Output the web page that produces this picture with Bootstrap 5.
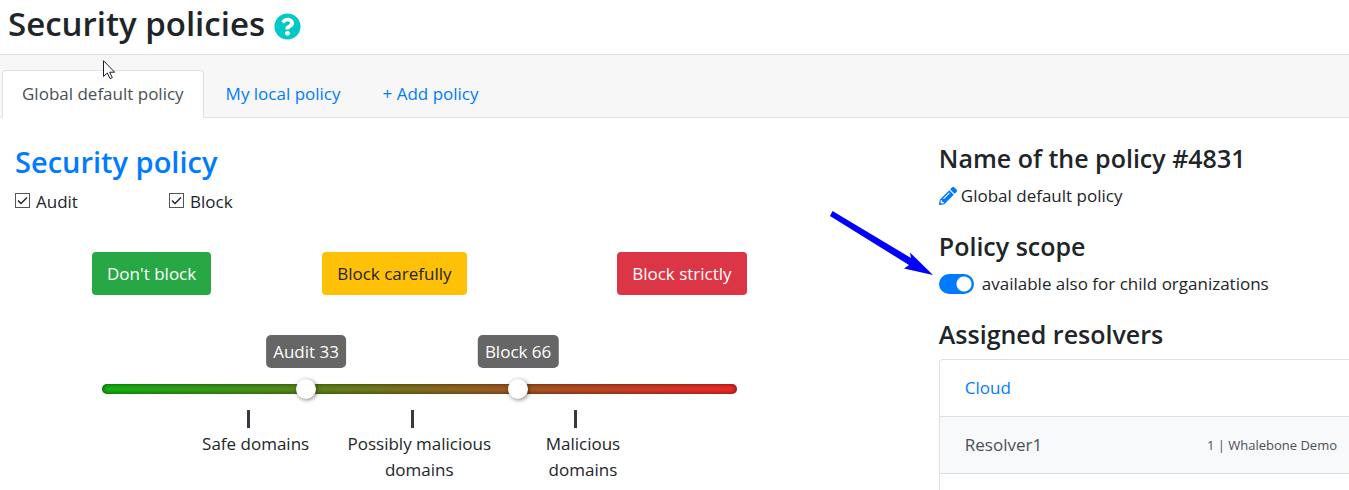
<!DOCTYPE html>
<html lang="en">
<head>
<meta charset="utf-8">
<meta name="viewport" content="width=device-width, initial-scale=1">
<title>Security policies</title>
<link href="https://cdn.jsdelivr.net/npm/bootstrap@5.3.0/dist/css/bootstrap.min.css" rel="stylesheet">
<style>
  body { font: 400 17px/26px "Open Sans", "Noto Sans", sans-serif; color: #212529; background: #fff; }
  a, .policy-title { color: #007bff; text-decoration: none; }
  h1 { font-size: 33px; line-height: 40px; font-weight: 600; }
  h2 { font-size: 29px; line-height: 36px; font-weight: 600; }
  h3 { font-size: 25px; line-height: 30px; font-weight: 600; margin-bottom: 10px; }

  .page-head { padding: 4px 8px 10px; gap: 9px; border-bottom: 1px solid #dfdfdf; }
  .help-btn { width: 27px; height: 27px; margin-top: 4px; }
  .tab-strip { padding: 15px 2px 0; background: #f7f7f7; }
  .tab-strip .nav-tabs { margin: 0 -2px; padding: 0 2px; gap: 2px; border-color: #dee2e6; }
  .tab-strip .nav-link { padding: 10px 19px; line-height: 26px; color: #007bff; border-radius: 4px 4px 0 0; }
  .tab-strip .nav-link.active { color: #495057; background: #fff; }
  .pointer { left: 103px; top: 5px; }

  .policy-grid { display: grid; grid-template-columns: 69fr 31fr; }
  .policy-main { padding: 26px 15px 0; }
  .policy-side { padding: 25px 0 0 8px; }
  .checks { display: grid; grid-template-columns: 154px 154px; margin-top: 9px; }
  .check-item { gap: 6px; }
  .tick { appearance: none; width: 15px; height: 15px; margin: 0; border: 1px solid #555; background: #fff; }
  .tick:checked { background: url("data:image/svg+xml,%3Csvg xmlns='http://www.w3.org/2000/svg' viewBox='0 0 13 13'%3E%3Cpath d='M2 6.5 5 9.5 11 3.5' fill='none' stroke='%23222' stroke-width='1.4'/%3E%3C/svg%3E"); }

  .levels { width: 73%; margin: 37px auto 0 77px; padding-right: 3px; }
  .presets { display: grid; grid-template-columns: 231fr 296fr 128fr; justify-items: start; }
  .presets .btn { font-size: 17px; line-height: 25px; padding: 8px 14px; border-radius: 4px; white-space: nowrap; }
  .preset-low { background: #28a745; color: #fff; }
  .preset-mid { background: #ffc107; color: #212529; }
  .preset-high { background: #dc3545; color: #fff; }

  .slider { display: grid; padding: 89px 10px 0; }
  .slider > * { grid-area: 1 / 1; }
  .track { height: 10px; border-radius: 5px; background: linear-gradient(90deg, #14b414, #f02828); box-shadow: inset 0 0 5px rgba(0,0,0,.6); }
  .scale-area { margin: 0 0 0 -8px; }
  .bubble { bottom: 26px; transform: translateX(-50%); padding: 4px 7px; line-height: 25px; color: #fff; background: #666; border-radius: 5px; white-space: nowrap; }
  .knob { appearance: none; height: 22px; margin: -6px -10px -6px -18px; background: none; pointer-events: none; z-index: 1; }
  .knob::-webkit-slider-thumb { appearance: none; width: 20px; height: 20px; border-radius: 50%; background: #fff; box-shadow: 1px 1px 4px rgba(0,0,0,.5); pointer-events: auto; }

  .zones { display: grid; grid-template-columns: repeat(3, 1fr); width: 75%; margin: 16px auto 0; }
  .zones > div::before { content: ""; display: block; width: 3px; height: 18px; margin: 0 auto 3px; position: relative; left: -7px; background: #343a40; }

  .scope-switch { appearance: none; width: 35px; height: 20px; margin: 0; border-radius: 10px; background: radial-gradient(circle at 25px 10px, #fff 7px, #007bff 8px); }
  .side-line { margin-bottom: 22px; }
  .callout { right: 100%; bottom: 21px; margin-right: 6px; }

  .resolvers { border: solid #dfdfdf; border-width: 1px 0 0 1px; border-radius: 4px 0 0 0; }
  .resolvers .list-group-item { border: 0; border-bottom: 1px solid #dfdfdf; border-radius: 0; padding: 15px 12px 15px 25px; background: none; color: #495057; }
  .resolvers .list-group-item:nth-child(2) { background: #f8f9fa; }
  .resolvers .list-group-item:last-child { border: 0; padding: 0; }
  .org { font-size: 13px; }
</style>
</head>
<body class="d-flex flex-column min-vh-100">
  <header class="page-head d-flex align-items-center">
    <h1 class="m-0">Security policies</h1>
    <button type="button" class="help-btn btn p-0 border-0 d-flex" aria-label="Help">
      <svg viewBox="0 0 512 512" width="27" height="27"><path fill="#00c9c8" d="M504 256c0 136.997-111.043 248-248 248S8 392.997 8 256C8 119.083 119.043 8 256 8s248 111.083 248 248zM262.655 90c-54.497 0-89.255 22.957-116.549 63.758-3.536 5.286-2.353 12.415 2.715 16.258l34.699 26.310c5.205 3.947 12.621 3.008 16.665-2.122 17.864-22.658 30.113-35.797 57.303-35.797 20.429 0 45.698 13.148 45.698 32.958 0 14.976-12.363 22.667-32.534 33.976C247.128 238.528 216 254.941 216 296v4c0 6.627 5.373 12 12 12h56c6.627 0 12-5.373 12-12v-1.333c0-28.462 83.186-29.647 83.186-106.667 0-58.002-60.165-102-116.531-102zM256 338c-25.365 0-46 20.635-46 46 0 25.364 20.635 46 46 46s46-20.636 46-46c0-25.365-20.635-46-46-46z"/></svg>
    </button>
  </header>

  <nav class="tab-strip position-relative" aria-label="Policies">
    <ul class="nav nav-tabs">
      <li class="nav-item"><a class="nav-link active" aria-current="page" href="#">Global default policy</a></li>
      <li class="nav-item"><a class="nav-link" href="#">My local policy</a></li>
      <li class="nav-item"><a class="nav-link" href="#">+ Add policy</a></li>
    </ul>
    <svg class="pointer position-absolute" width="13" height="20" viewBox="0 0 13 20" aria-hidden="true"><path d="M.5.7V16.500L4.300 13l2.700 5.600 2.300-1-2.600-5.400h5z" fill="#fff" stroke="#1c1c28"/></svg>
  </nav>

  <main class="policy-grid flex-grow-1">
    <section class="policy-main">
      <h2 class="policy-title m-0">Security policy</h2>
      <div class="checks">
        <div class="check-item d-flex"><input class="tick mt-1" type="checkbox" id="audit" checked><label for="audit">Audit</label></div>
        <div class="check-item d-flex"><input class="tick mt-1" type="checkbox" id="block" checked><label for="block">Block</label></div>
      </div>
      <div class="levels">
        <div class="presets">
          <button type="button" class="btn preset-low">Don't block</button>
          <button type="button" class="btn preset-mid">Block carefully</button>
          <button type="button" class="btn preset-high">Block strictly</button>
        </div>
        <div class="slider">
          <div class="track"></div>
          <div class="scale-area position-relative">
            <output class="bubble position-absolute" for="audit-level" style="left:33%">Audit 33</output>
            <output class="bubble position-absolute" for="block-level" style="left:66%">Block 66</output>
          </div>
          <input class="knob" type="range" id="audit-level" aria-label="Audit" value="33">
          <input class="knob" type="range" id="block-level" aria-label="Block" value="66">
        </div>
        <div class="zones text-center">
          <div>Safe domains</div>
          <div>Possibly malicious<br>domains</div>
          <div>Malicious<br>domains</div>
        </div>
      </div>
    </section>

    <aside class="policy-side d-flex flex-column">
      <h3>Name of the policy #4831</h3>
      <div class="side-line d-flex align-items-center gap-1">
        <a href="#" class="d-flex" aria-label="Rename policy"><svg width="18" height="18" viewBox="0 0 512 512"><path fill="#007bff" d="M497.900 142.100l-46.100 46.100c-4.700 4.700-12.300 4.700-17 0l-111-111c-4.700-4.700-4.700-12.300 0-17l46.100-46.100c18.700-18.700 49.100-18.700 67.900 0l60.100 60.100c18.800 18.700 18.800 49.100 0 67.900zM284.200 99.800L21.600 362.400.4 483.900c-2.900 16.400 11.400 30.600 27.800 27.800l121.500-21.300 262.600-262.600c4.700-4.700 4.700-12.300 0-17l-111-111c-4.800-4.700-12.400-4.700-17.100 0zM124.100 339.900c-5.500-5.500-5.500-14.300 0-19.800l154-154c5.500-5.500 14.300-5.500 19.800 0s5.500 14.300 0 19.800l-154 154c-5.500 5.500-14.300 5.500-19.800 0zM88 424h48v36.300l-64.500 11.300-31.100-31.100L51.700 376H88v48z"/></svg></a>
        <span>Global default policy</span>
      </div>
      <h3>Policy scope</h3>
      <div class="side-line position-relative d-flex align-items-center">
        <input class="scope-switch" type="checkbox" role="switch" id="scope" checked>
        <label for="scope" class="ms-2">available also for child organizations</label>
        <svg class="callout position-absolute" width="103" height="65" viewBox="0 0 103 65" aria-hidden="true"><path d="M2.500 0 81 47 80 41.500 103 64 74 57.500 79 54 0 5z" fill="#00f"/></svg>
      </div>
      <h3>Assigned resolvers</h3>
      <ul class="resolvers list-group flex-grow-1">
        <li class="list-group-item"><a href="#">Cloud</a></li>
        <li class="list-group-item d-flex justify-content-between align-items-center">Resolver1 <span class="org">1 | Whalebone Demo</span></li>
        <li class="list-group-item flex-grow-1"></li>
      </ul>
    </aside>
  </main>
<script src="https://cdn.jsdelivr.net/npm/bootstrap@5.3.0/dist/js/bootstrap.bundle.min.js"></script>
</body>
</html>
